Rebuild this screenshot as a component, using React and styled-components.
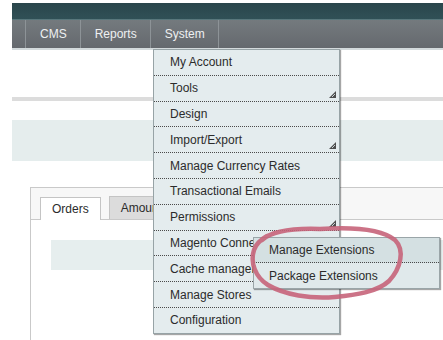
import React from 'react'
import styled, { createGlobalStyle } from 'styled-components'

const GlobalStyle = createGlobalStyle`
  html, body {
    margin: 0;
    padding: 0;
    background: #fff;
  }
  body {
    font-family: "Liberation Sans", Arial, sans-serif;
    font-size: 12px;
    color: #2f2f2f;
  }
`

const Page = styled.div`
  position: relative;
  width: 443px;
  height: 340px;
  overflow: hidden;
  padding: 3px 0 0 12px;
  box-sizing: border-box;
`

const Header = styled.div`
  height: 16px;
  background: linear-gradient(#2a464c, #305056);
  border-bottom: 1px solid #58777c;
`

const Nav = styled.ul`
  display: flex;
  height: 28px;
  margin: 0;
  padding: 0;
  list-style: none;
  overflow: hidden;
  background: linear-gradient(#747a7e, #65696e);
`

const NavItem = styled.li`
  display: flex;
  align-items: center;
  flex-shrink: 0;
  padding: ${({ spacer }) => (spacer ? '0 0 0 13px' : '0 13px 0 14px')};
  color: #eef0f1;
  border-right: 1px solid #8d9397;
`

const NavShadow = styled.div`
  height: 2px;
  background: #d3dadc;
`

const Strip = styled.div`
  height: 4px;
  margin-top: 47px;
  background: #dcdcdc;
`

const Band = styled.div`
  height: 41px;
  margin-top: 19px;
  background: #e5eded;
`

const Panel = styled.div`
  margin: 26px 0 0 18px;
  border-top: 1px solid #c9c9c9;
  border-left: 1px solid #c9c9c9;
  height: 200px;
`

const TabBar = styled.div`
  display: flex;
  align-items: flex-end;
  gap: 8px;
  height: 31px;
  padding-left: 9px;
  background: #f7f7f7;
  border-bottom: 1px solid #c9c9c9;
`

const Tab = styled.div`
  display: flex;
  align-items: center;
  height: 22px;
  padding: 0 11px;
  border: 1px solid #c4c4c4;
  border-bottom: none;
  margin-bottom: ${({ active }) => (active ? '-1px' : '0')};
  background: ${({ active }) => (active ? '#fff' : '#dcdcdc')};
  color: #2b2b2b;
`

const PanelBody = styled.div`
  padding: 20px 0 0 20px;
`

const InnerBar = styled.div`
  height: 30px;
  background: #e6eeee;
`

const Menu = styled.ul`
  position: absolute;
  left: 153px;
  top: 49px;
  width: 185px;
  margin: 0;
  padding: 0;
  list-style: none;
  background: #e4ecee;
  border: 1px solid #97a3a6;
  box-shadow: 1px 1px 1px rgba(0, 0, 0, 0.35);
  z-index: 2;
`

const MenuItem = styled.li`
  position: relative;
  display: flex;
  align-items: center;
  height: 24.8px;
  padding-left: ${({ sub }) => (sub ? 15 : 16)}px;
  border-bottom: ${({ last }) => (last ? 'none' : '1px dotted #4a4a4a')};
  background: ${({ hover }) => (hover ? '#d4e0e2' : 'transparent')};
  color: #2b2b2b;
  white-space: nowrap;
`

const Corner = styled.svg`
  position: absolute;
  right: 3px;
  bottom: 3px;
`

const Submenu = styled.ul`
  position: absolute;
  left: 99px;
  top: 6px;
  width: 185px;
  margin: 0;
  padding: 0;
  list-style: none;
  background: #e0e9eb;
  border: 1px solid #9aa5a8;
  box-shadow: 1px 1px 1px rgba(0, 0, 0, 0.35);
  z-index: 3;
`

const Annotation = styled.svg`
  position: absolute;
  left: 0;
  top: 0;
  pointer-events: none;
  z-index: 4;
`

function SubArrow() {
  return (
    <Corner width="7" height="7" viewBox="0 0 7 7">
      <polygon points="7,0 7,7 0,7" fill="#4d4d4d" />
      <line x1="6" y1="3" x2="3" y2="6" stroke="#c8d0d2" strokeWidth="1" />
    </Corner>
  )
}

const items = [
  { label: 'My Account' },
  { label: 'Tools', arrow: true },
  { label: 'Design' },
  { label: 'Import/Export', arrow: true },
  { label: 'Manage Currency Rates' },
  { label: 'Transactional Emails' },
  { label: 'Permissions', arrow: true },
  { label: 'Magento Connect', sub: ['Manage Extensions', 'Package Extensions'] },
  { label: 'Cache management' },
  { label: 'Manage Stores' },
  { label: 'Configuration' },
]

export default function App() {
  return (
    <>
      <GlobalStyle />
      <Page>
        <Header />
        <Nav>
          <NavItem spacer />
          <NavItem>CMS</NavItem>
          <NavItem>Reports</NavItem>
          <NavItem>System</NavItem>
        </Nav>
        <NavShadow />
        <Strip />
        <Band />
        <Panel>
          <TabBar>
            <Tab active>Orders</Tab>
            <Tab>Amounts</Tab>
          </TabBar>
          <PanelBody>
            <InnerBar />
          </PanelBody>
        </Panel>

        <Menu>
          {items.map((item, i) => (
            <MenuItem key={item.label} last={i === items.length - 1}>
              {item.label}
              {item.arrow && <SubArrow />}
              {item.sub && (
                <Submenu>
                  {item.sub.map((s, j) => (
                    <MenuItem key={s} sub hover={j === 0} last={j === item.sub.length - 1}>
                      {s}
                    </MenuItem>
                  ))}
                </Submenu>
              )}
            </MenuItem>
          ))}
        </Menu>

        <Annotation width="443" height="340" viewBox="0 0 443 340">
          <path
            d="M262 240 C272 231 292 228 320 229 C350 227 380 228 395 240 C405 250 401 268 389 281 C377 292 356 295 335 297 C310 299 285 295 268 285 C255 277 250 262 254 250 C256 244 260 240 267 236"
            fill="none"
            stroke="#c7647a"
            strokeWidth="4.5"
            strokeLinecap="round"
            strokeLinejoin="round"
            opacity="0.9"
          />
        </Annotation>
      </Page>
    </>
  )
}
